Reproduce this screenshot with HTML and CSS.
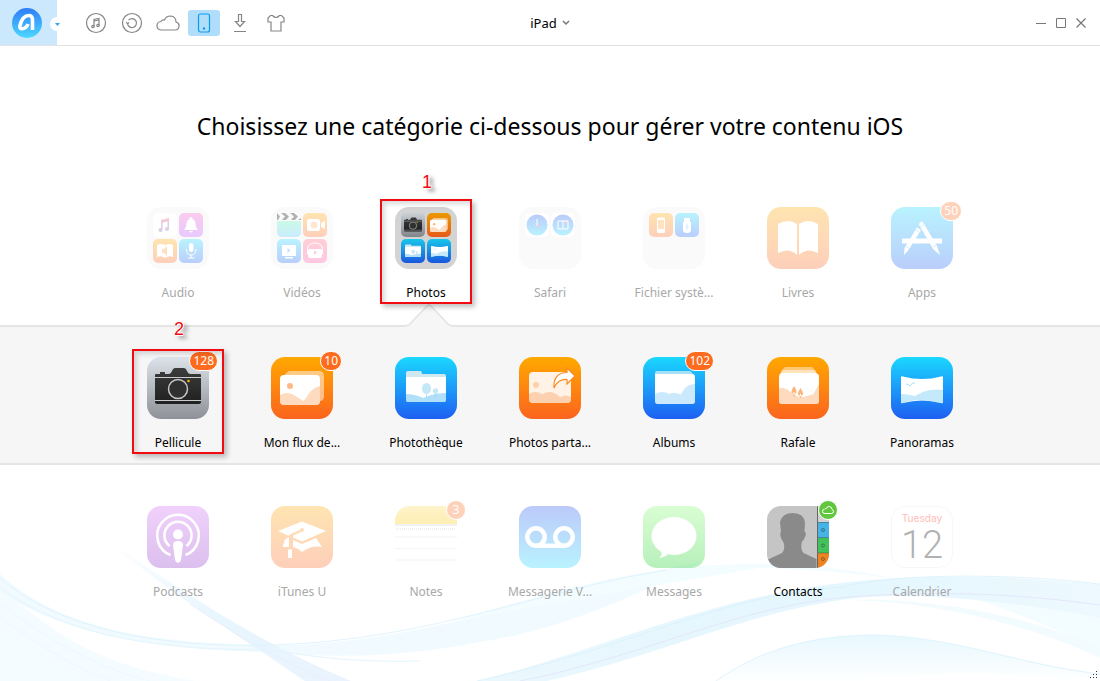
FILE: index.html
```
<!DOCTYPE html>
<html lang="fr">
<head>
<meta charset="utf-8">
<title>iPad</title>
<link rel="stylesheet" href="styles.css">
</head>
<body>
<svg class="defs" width="0" height="0" aria-hidden="true">
  <defs>
    <linearGradient id="orange" x2="0" y2="1"><stop stop-color="#ffa800"/><stop offset="1" stop-color="#fb641f"/></linearGradient>
    <linearGradient id="blue" x2="0" y2="1"><stop stop-color="#1ad8ff"/><stop offset="1" stop-color="#1d5ff2"/></linearGradient>
    <linearGradient id="blueUp" x2="0" y2="1"><stop stop-color="#2352ee"/><stop offset="1" stop-color="#1ad8ff"/></linearGradient>
    <linearGradient id="silver" x2="0" y2="1"><stop stop-color="#dde3ea"/><stop offset="1" stop-color="#8e9197"/></linearGradient>
    <linearGradient id="pink" x2="0" y2="1"><stop stop-color="#f559c8"/><stop offset="1" stop-color="#b44dff"/></linearGradient>
    <linearGradient id="rose" x2="0" y2="1"><stop stop-color="#ff5f78"/><stop offset="1" stop-color="#ff4c9c"/></linearGradient>
    <linearGradient id="violet" x2="0" y2="1"><stop stop-color="#d269f6"/><stop offset="1" stop-color="#8a2fc4"/></linearGradient>
    <linearGradient id="green" x2="0" y2="1"><stop stop-color="#86fa70"/><stop offset="1" stop-color="#14cf22"/></linearGradient>
    <linearGradient id="mint" x2="0" y2="1"><stop stop-color="#52f0b5"/><stop offset="1" stop-color="#52c1fa"/></linearGradient>
    <linearGradient id="note" x2="0" y2="1"><stop stop-color="#ffda57"/><stop offset="1" stop-color="#fdc900"/></linearGradient>
    <linearGradient id="music" x2="0" y2="1"><stop stop-color="#ff4252"/><stop offset="1" stop-color="#3a74ff"/></linearGradient>
    <linearGradient id="body" x2="0" y2="1"><stop stop-color="#3c3c3c"/><stop offset="1" stop-color="#202020"/></linearGradient>
    <linearGradient id="brand" x2="0" y2="1"><stop stop-color="#2f7cf8"/><stop offset="1" stop-color="#4bd8ff"/></linearGradient>
    <linearGradient id="ribbon"><stop stop-color="#def3fd" stop-opacity=".6"/><stop offset=".6" stop-color="#e4f6fe"/><stop offset="1" stop-color="#edf9fe"/></linearGradient>
    <linearGradient id="mist" x2="0" y2="1"><stop stop-color="#e8f8fe"/><stop offset="1" stop-color="#fff"/></linearGradient>
    <linearGradient id="diag" x2="1" y2="1"><stop stop-color="#e6f6fe" stop-opacity="0"/><stop offset=".5" stop-color="#e8f6fe"/><stop offset="1" stop-color="#eaf3fe"/></linearGradient>
    <clipPath id="tileClip"><rect width="62" height="62" rx="14"/></clipPath>
    <symbol id="camera" viewBox="0 0 46 36">
      <path d="M5 4h5v2H5zM0 7q0-1 1-1h13q2 0 3-3t3-3h9q2 0 3 3t3 3h10q1 0 1 1v27q0 2-2 2H2q-2 0-2-2z" fill="url(#body)"/>
      <path d="M0 9.500h46M0 32.500h46" stroke="#c9cbce"/>
      <circle cx="23" cy="21" r="11" fill="#272727"/><circle cx="23" cy="21" r="9.500" fill="#303030" stroke="#c5c7c9" stroke-width="1.500"/><circle cx="33.500" cy="13" r="1.300" fill="#f7b500"/>
    </symbol>
    <symbol id="picture" viewBox="0 0 44 34">
      <path d="M9 0h30q5 0 5 5v20q0 5-4 5H4V6q0-3 5-6z" fill="#fff" opacity=".5"/>
      <rect y="4" width="40" height="30" rx="4" fill="#fff"/><circle cx="10" cy="15" r="3" fill="#ffb783"/>
      <path d="M0 24q7-4 14 0t14 10H4q-4 0-4-4zM18 34q6-3 10-10t12-9v15q0 4-4 4z" fill="#fdc193" opacity=".6"/>
    </symbol>
    <symbol id="folder" viewBox="0 0 40 32">
      <path d="M0 2q0-2 2-2h12q2 0 2 3h22q2 0 2 2v4H0z" fill="#cfe8f2"/><path d="M0 6h40v23q0 2-2 2H2q-2 0-2-2z" fill="#fff"/>
      <ellipse cx="20.500" cy="17.500" rx="4.500" ry="5.500" fill="#c4e9f6"/><circle cx="29.500" cy="20" r="2.700" fill="#c4e9f6"/><path d="M20.500 20v7M29.500 21v5" stroke="#c4e9f6"/>
      <path d="M0 23q12 0 25 8H2q-2 0-2-2zM11 31q12-9 29-9v7q0 2-2 2z" fill="#7cc9f6" opacity=".6"/>
    </symbol>
    <symbol id="pano" viewBox="0 0 42 28">
      <path d="M0 1q0-1 2-.500 19 5 38 0 2-.500 2 .500v25q0 2-2 1-19-5-38 0-2 1-2-1z" fill="#fff"/>
      <path d="M0 18q12 0 22 6-11 0-20 3-2 1-2-1zM8 25q14-14 34-11v12q0 2-2 1-17-4-32-2z" fill="#9bdaf8" opacity=".6"/><path d="M5 8q3 0 4 2 2-4 5-3" stroke="#a8ddfa" fill="none"/>
    </symbol>
    <symbol id="clouds" viewBox="0 0 24 16"><path d="M6 15q-5 0-5-4.200 0-4 4-4.300Q6 4.500 8.500 5q1.500-4 6-4 5.500.500 5.500 6 3.500 1 3 4.500-.500 3.500-4 3.500z" fill="none" stroke="currentColor" stroke-width="1.200"/></symbol>
  </defs>
</svg>

<div class="app">
  <header class="bar">
    <div class="bar-left">
      <div class="brand">
        <button class="brand-logo" aria-label="AnyTrans">
          <svg width="30" height="30" viewBox="0 0 30 30"><circle cx="15" cy="15" r="15" fill="url(#brand)"/><path d="M20.500 22V12.500Q20.500 7.500 17 7.500C12 7.500 9 13 7.800 18.200Q7.500 20.800 10 20.800Q14.500 20.500 16 16" fill="none" stroke="#fff" stroke-width="3.600" stroke-linejoin="round"/></svg>
        </button>
        <button class="brand-more" aria-label="Menu"><svg width="5" height="3" viewBox="0 0 5 3"><path d="M0 0h5L2.500 3z" fill="#32a8ec"/></svg></button>
      </div>
      <nav class="tools">
        <button class="tool" aria-label="Musique"><svg width="22" height="22" viewBox="0 0 22 22" fill="none" stroke="currentColor" stroke-width="1.200"><circle cx="11" cy="11" r="9.500"/><path d="M9 14.500V7.500l5-1v7M9 9l5-1"/><circle cx="8" cy="14.500" r="1.200"/><circle cx="13" cy="13.500" r="1.200"/></svg></button>
        <button class="tool" aria-label="Restaurer"><svg width="22" height="22" viewBox="0 0 22 22" fill="none" stroke="currentColor" stroke-width="1.200"><circle cx="11" cy="11" r="9.500"/><path d="M7.500 8.200a4.500 4.500 0 1 1-1 3.300M5.200 10.200l1.300 1.500 1.700-1.200"/></svg></button>
        <button class="tool" aria-label="iCloud"><svg width="24" height="16"><use href="#clouds"/></svg></button>
        <button class="tool tool-on" aria-label="Appareil"><svg width="14" height="20" viewBox="0 0 14 20" fill="none" stroke="currentColor" stroke-width="1.200"><rect x="1.500" y="1" width="11" height="18" rx="2"/><circle cx="7" cy="15.500" r=".600" fill="currentColor"/></svg></button>
        <button class="tool" aria-label="Télécharger"><svg width="14" height="20" viewBox="0 0 14 20" fill="none" stroke="currentColor" stroke-width="1.200"><path d="M5.500 1.500h3v7h3L7 13.500 2.500 8.500h3zM1 18.500h12"/></svg></button>
        <button class="tool" aria-label="Thèmes"><svg width="18" height="20" viewBox="0 0 18 20" fill="none" stroke="currentColor" stroke-width="1.200"><path d="M5.500 2.500q3.500 4 7 0h2L17 5v4h-3v9H4V9H1V5l2.500-2.500z"/></svg></button>
      </nav>
    </div>
    <button class="device">iPad <svg width="8" height="6" viewBox="0 0 8 6"><path d="M1 1l3 3 3-3" fill="none" stroke="#777" stroke-width="1.500"/></svg></button>
    <div class="window-buttons">
      <button aria-label="Réduire"><svg width="12" height="12" viewBox="0 0 12 12"><path d="M1 6.500h10" stroke="currentColor"/></svg></button>
      <button aria-label="Agrandir"><svg width="12" height="12" viewBox="0 0 12 12"><path d="M1.500 1.500h9v9h-9z" fill="none" stroke="currentColor"/></svg></button>
      <button aria-label="Fermer"><svg width="12" height="12" viewBox="0 0 12 12"><path d="M1.500 1.500l9 9m0-9l-9 9" stroke="currentColor" stroke-width="1.200"/></svg></button>
    </div>
  </header>

  <main class="content">
    <svg class="waves" viewBox="0 0 1100 181" preserveAspectRatio="none" aria-hidden="true">
      <path d="M0 92C50 120 70 160 196 181H0z" fill="#f4fcff"/>
      <path d="M0 74C60 130 160 146 290 145C430 140 560 90 700 62C640 95 560 130 480 142C400 158 330 158 270 152C130 150 50 125 0 92z" fill="#eefaff" opacity=".8"/>
      <path d="M105 40C170 80 240 135 351 181H305C230 130 180 100 105 40z" fill="url(#diag)"/>
      <path d="M456 120C560 90 640 64 758 64C880 64 1000 100 1100 150V118C1000 95 880 70 758 68z" fill="#f3fcff"/>
      <path d="M477 181C640 140 740 77 947 77C1000 76 1050 80 1100 84V118C1010 100 900 90 840 100C740 115 660 155 547 181z" fill="url(#ribbon)"/>
      <path d="M716 181C760 150 810 135 877 135C960 138 1020 165 1100 174V181H1060C1000 170 930 172 870 181z" fill="url(#mist)"/>
      <path d="M840 100C920 96 1040 116 1100 150V158C1020 120 920 100 840 100z" fill="#eaf8fe" opacity=".6"/>
      <g fill="none" stroke-width="1">
        <path d="M0 78C60 130 160 148 273 145C430 140 540 90 666 70" stroke="#d8f1fc" opacity=".8"/>
        <path d="M0 88C70 138 160 150 273 150C330 160 370 162 420 161" stroke="#e2f5fd"/>
        <path d="M477 181C640 145 720 95 842 87C900 72 1020 74 1100 84" stroke="#d8f1fb" opacity=".8"/>
        <path d="M520 181C650 155 740 105 850 97C940 90 1020 94 1100 105" stroke="#e4e7fb"/>
        <path d="M716 181C760 150 810 135 877 135C960 138 1020 165 1100 174" stroke="#dff4fd"/>
        <path d="M0 104C50 140 90 165 150 181M0 118C40 145 70 165 110 181" stroke="#ecf9fe"/>
        <path d="M190 104C230 130 275 160 330 181" stroke="#e8effd"/>
      </g>
    </svg>

    <h1 class="heading">Choisissez une catégorie ci-dessous pour gérer votre contenu iOS</h1>

    <section class="row row-top">
      <button class="item dim">
        <span class="tile"><svg viewBox="0 0 62 62"><rect width="62" height="62" rx="14" fill="#f0f0f0"/><rect x="6" y="6" width="24" height="24" rx="5" fill="#fff"/><rect x="32" y="6" width="24" height="24" rx="5" fill="url(#pink)"/><rect x="6" y="32" width="24" height="24" rx="5" fill="url(#orange)"/><rect x="32" y="32" width="24" height="24" rx="5" fill="url(#blue)"/>
          <g fill="url(#music)"><path d="M14 13l8-2v3l-8 2zM14 13h1.500v10H14zM20.500 12H22v10h-1.500z"/><circle cx="13.500" cy="23" r="2"/><circle cx="20" cy="22" r="2"/></g>
          <g fill="#fff"><path d="M44 10q1.500 0 1.500 2 3 1 3 5 0 3 2 5v1H37.500v-1q2-2 2-5 0-4 3-5 0-2 1.500-2zM42 24h4q-2 3-4 0z"/><path d="M10 38q4-2 8 0 4-2 8 0v12q-4-2-8 1-4-3-8-1z"/><rect x="42" y="36" width="4.500" height="9" rx="2.200"/></g>
          <path d="M15 42h2l3-3v10l-3-3h-2z" fill="#ff9640"/><path d="M39.500 42q0 6 4.700 6t4.700-6M44.200 48v3M41 51h6.500" fill="none" stroke="#fff"/></svg></span>
        <span class="label">Audio</span>
      </button>
      <button class="item dim">
        <span class="tile"><svg viewBox="0 0 62 62"><rect width="62" height="62" rx="14" fill="#f0f0f0"/><path d="M6 14h24v11q0 5-5 5H11q-5 0-5-5z" fill="url(#mint)"/><rect x="32" y="6" width="24" height="24" rx="5" fill="url(#orange)"/><rect x="6" y="32" width="24" height="24" rx="5" fill="url(#blue)"/><rect x="32" y="32" width="24" height="24" rx="5" fill="url(#rose)"/>
          <path d="M6 6l3 3.500L7 13H6zM10 6h4l4 3.500-3 3.500h-4l3-3.500zM19 6h4l4 3.500-3 3.500h-4l3-3.500zM27 13l3-2v2z" fill="#000"/>
          <g fill="#fff"><rect x="36" y="12" width="13" height="12" rx="2"/><path d="M50 16l4-2v8l-4-2z"/><rect x="11" y="38" width="14" height="11"/><path d="M14 50h8v1.500h-8z"/><rect x="37" y="42" width="14" height="9" rx="2"/></g><path d="M36.500 47v-4q0-7 7.500-7t7.500 7v4" stroke="#fff" fill="none"/><circle cx="43" cy="18" r="3.500" fill="#ffb36f"/><path d="M16.500 41l3 2.500-3 2.500z" fill="#3791ff"/><path d="M43 43.500l3 2-3 2z" fill="#ff4f94"/></svg></span>
        <span class="label">Vidéos</span>
      </button>
      <button class="item current">
        <span class="mark">1</span><span class="frame"></span>
        <span class="tile"><svg viewBox="0 0 62 62"><rect width="62" height="62" rx="14" fill="#d3d3d3"/><rect x="6" y="6" width="24" height="24" rx="5" fill="url(#silver)"/><rect x="32" y="6" width="24" height="24" rx="5" fill="url(#orange)"/><rect x="6" y="32" width="24" height="24" rx="5" fill="url(#blue)"/><rect x="32" y="32" width="24" height="24" rx="5" fill="url(#blue)"/>
          <g fill="#000" opacity=".08"><rect x="6" y="6" width="24" height="24" rx="5"/><rect x="32" y="6" width="24" height="24" rx="5"/><rect x="6" y="32" width="24" height="24" rx="5"/><rect x="32" y="32" width="24" height="24" rx="5"/></g>
          <use href="#camera" x="9" y="10" width="18" height="15"/><use href="#picture" x="35" y="11" width="18" height="14"/><use href="#folder" x="10" y="37" width="16" height="14"/><use href="#pano" x="36" y="38" width="17" height="13"/></svg></span>
        <span class="label">Photos</span>
        <svg class="pointer" width="44" height="23" viewBox="0 0 44 23"><path d="M0 23v-1l2-1L20 2q2-2 4 0l18 19 2 1v1z" fill="#f6f6f6"/><path d="M0 21h2L20 2q2-2 4 0l18 19h2" fill="none" stroke="#e3e3e3" stroke-width="1.500"/></svg>
      </button>
      <button class="item dim">
        <span class="tile"><svg viewBox="0 0 62 62"><rect width="62" height="62" rx="14" fill="#f0f0f0"/><rect x="6" y="6" width="24" height="24" rx="5" fill="#fff"/><rect x="32" y="6" width="24" height="24" rx="5" fill="#fff"/><circle cx="18" cy="18" r="10.500" fill="url(#blueUp)"/><circle cx="44" cy="18" r="10.500" fill="url(#blueUp)"/><path d="M17.500 12h1v7h-1z" fill="#fff"/><path d="M18 18h3v1.500h-3zM46 13h2v3h-2z" fill="#f56"/><path d="M39 14h10v8H39zm5 0v8" fill="none" stroke="#fff"/></svg></span>
        <span class="label">Safari</span>
      </button>
      <button class="item dim">
        <span class="tile"><svg viewBox="0 0 62 62"><rect width="62" height="62" rx="14" fill="#f0f0f0"/><rect x="6" y="6" width="24" height="24" rx="5" fill="url(#orange)"/><rect x="32" y="6" width="24" height="24" rx="5" fill="url(#blue)"/><rect x="14" y="10.500" width="8" height="15.500" rx="1.500" fill="#fff"/><path d="M15 13h6v9h-6z" fill="#ff9d3d"/><path d="M41 11h6v4h1v8q0 3-4 3t-4-3v-8h1z" fill="#fff"/><path d="M44 17v6m-1.500-4l1.500 2 1.500-2" stroke="#58a8ff" stroke-width=".700" fill="none"/></svg></span>
        <span class="label">Fichier systè...</span>
      </button>
      <button class="item dim">
        <span class="tile"><svg viewBox="0 0 62 62"><rect width="62" height="62" rx="14" fill="url(#orange)"/><path d="M11 17q10-6 19 0v31q-8-8-19-2zM51 17q-10-6-19 0v31q8-8 19-2z" fill="#fff"/></svg></span>
        <span class="label">Livres</span>
      </button>
      <button class="item dim">
        <span class="tile"><svg viewBox="0 0 62 62"><rect width="62" height="62" rx="14" fill="url(#blue)"/><g fill="#fff"><path d="M11 31.500h9l-3 5h-6zM24 31.500h12l3 5H21zM41 31.500h10v5h-7z"/><path d="M28.500 16q2-3 4 0L46 39l3 9-7-6-13.500-23.500q-1-1 0-2.500z"/><path d="M26 20.500l4 2.500-12.500 20-4.500 5 .500-7z"/></g><path d="M25 23l3.500 2.500M15 39.500l4 2.500M41 40l5-2.500M29 20l4-2" stroke="#68acf8" stroke-width=".800"/></svg><span class="badge">50</span></span>
        <span class="label">Apps</span>
      </button>
    </section>

    <section class="row row-band">
      <button class="item current">
        <span class="mark">2</span><span class="frame"></span>
        <span class="tile"><svg viewBox="0 0 62 62"><rect width="62" height="62" rx="14" fill="url(#silver)"/><use href="#camera" x="8" y="11" width="46" height="36"/></svg><span class="badge">128</span></span>
        <span class="label">Pellicule</span>
      </button>
      <button class="item">
        <span class="tile"><svg viewBox="0 0 62 62"><rect width="62" height="62" rx="14" fill="url(#orange)"/><use href="#picture" x="9" y="14" width="44" height="34"/></svg><span class="badge">10</span></span>
        <span class="label">Mon flux de...</span>
      </button>
      <button class="item">
        <span class="tile"><svg viewBox="0 0 62 62"><rect width="62" height="62" rx="14" fill="url(#blue)"/><use href="#folder" x="11" y="14" width="40" height="32"/></svg></span>
        <span class="label">Photothèque</span>
      </button>
      <button class="item">
        <span class="tile"><svg viewBox="0 0 62 62"><rect width="62" height="62" rx="14" fill="url(#orange)"/><rect x="10" y="15" width="42" height="31" rx="4" fill="#fff2e6"/><circle cx="17" cy="28" r="3" fill="#fdd0aa"/><path d="M10 37q6-4 13 0t12 9H14q-4 0-4-4zM14 46q15-20 29-4l3 4zM36 46q7-11 16-6v2q0 4-4 4z" fill="#fcbf92" opacity=".65"/><path d="M35 31q-1-15 13-15.500v-4.500l8 8-8 8v-4.500q-9-.500-13 8.500z" fill="#fff" stroke="#fb8a20" stroke-width="1.200"/></svg></span>
        <span class="label">Photos parta...</span>
      </button>
      <button class="item">
        <span class="tile"><svg viewBox="0 0 62 62"><rect width="62" height="62" rx="14" fill="url(#blue)"/><path d="M12 16q0-2 2-2h32q3 0 4 4H12z" fill="#a5dff8"/><path d="M12 17h37q3 0 3 3v24q0 3-3 3H15q-3 0-3-3z" fill="#fff"/><path d="M12 37q12-7 25 10H15q-3 0-3-3zM17 47q12-22 31-1l-1 1zM28 47q8-6 12-13t12-7v17q0 3-3 3z" fill="#8bcffa" opacity=".45"/></svg><span class="badge">102</span></span>
        <span class="label">Albums</span>
      </button>
      <button class="item">
        <span class="tile"><svg viewBox="0 0 62 62"><rect width="62" height="62" rx="14" fill="url(#orange)"/><path d="M17 11q0-1 2-1h25q2 0 2 1l3 3v6H14v-6z" fill="#fff" opacity=".45"/><path d="M16 13h31l5 6H12z" fill="#fff" opacity=".5"/><path d="M14 16h35q3 1 3 4v24q0 3-3 3H15q-3 0-3-3V20q0-3 2-4z" fill="#fff"/><path d="M12 31q6-1 13 5t15 3q7-3 12-1v6q0 3-3 3H15q-3 0-3-3zM52 27v17q0 3-3 3h-8z" fill="#fdc193" opacity=".6"/><path d="M27 29q-5 7 0 8 5-1 0-8zM33.500 31q-5 7 0 8 5-1 0-8zM26.500 35h1v5h-1zM33 37h1v4h-1z" fill="#fcb67c"/></svg></span>
        <span class="label">Rafale</span>
      </button>
      <button class="item">
        <span class="tile"><svg viewBox="0 0 62 62"><rect width="62" height="62" rx="14" fill="url(#blue)"/><use href="#pano" x="10" y="19" width="42" height="28"/></svg></span>
        <span class="label">Panoramas</span>
      </button>
    </section>

    <section class="row row-bottom">
      <button class="item dim">
        <span class="tile"><svg viewBox="0 0 62 62"><rect width="62" height="62" rx="14" fill="url(#violet)"/><g fill="none" stroke="#fff" stroke-width="2.600"><path d="M23.500 49a20.800 20.800 0 1 1 15 0"/><path d="M22.500 40a13.600 13.600 0 1 1 17 0"/></g><circle cx="31" cy="28.500" r="5" fill="#fff"/><path d="M26 39q0-4 5-4t5 4l-2 15q-1 3-3 3t-3-3z" fill="#fff"/></svg></span>
        <span class="label">Podcasts</span>
      </button>
      <button class="item dim">
        <span class="tile"><svg viewBox="0 0 62 62"><rect width="62" height="62" rx="14" fill="url(#orange)"/><path d="M31 15.500L55 25 31 35.500 22 31.500v-2l10-4.500-1-2-13 6v1L7 25zM14 33.500L18 31v10h-6.500zM22 34l9 4 14-6 6 9q-10-2-20 5-4-4-9-5z" fill="#fff"/><path d="M17 44q2-2 4 0v8h-4z" fill="#fff"/><circle cx="31" cy="24" r="2" fill="#fc942b"/></svg></span>
        <span class="label">iTunes U</span>
      </button>
      <button class="item dim">
        <span class="tile"><svg viewBox="0 0 62 62"><rect width="62" height="62" rx="14" fill="#fff"/><path d="M0 18V14Q2 1 14 0h34q12 1 14 14v4z" fill="url(#note)"/><path d="M0 19h62" stroke="#aaa"/><path d="M1 23h60" stroke="#999" stroke-dasharray="1 1"/><path d="M0 31h62M0 42.500h62M0 54h62" stroke="#ddd"/></svg><span class="badge">3</span></span>
        <span class="label">Notes</span>
      </button>
      <button class="item dim">
        <span class="tile"><svg viewBox="0 0 62 62"><rect width="62" height="62" rx="14" fill="url(#blueUp)"/><g fill="none" stroke="#fff" stroke-width="4.500"><circle cx="17" cy="31" r="8.700"/><circle cx="45" cy="31" r="8.700"/><path d="M17 39.800h28"/></g></svg></span>
        <span class="label">Messagerie V...</span>
      </button>
      <button class="item dim">
        <span class="tile"><svg viewBox="0 0 62 62"><rect width="62" height="62" rx="14" fill="url(#green)"/><ellipse cx="31" cy="30" rx="22.500" ry="19" fill="#fff"/><path d="M18 44q2 5-2 8 7-1 10-5z" fill="#fff"/></svg></span>
        <span class="label">Messages</span>
      </button>
      <button class="item">
        <span class="tile"><svg viewBox="0 0 62 62"><g clip-path="url(#tileClip)"><path d="M0 0h62v62H0z" fill="#c5c5c5"/><path d="M13 16Q15 7 26 7t12 10l-.500 9q2 0 1 4l-2 4q-2 1-2 4-1 6 2 9l13 6v9H0v-8l15-7q3-3 2-9-1-3-2-4-3-6-1-8z" fill="#8a8a8a"/><path d="M51 0h11v16H51z" fill="#d2d2d2"/><path d="M51 16h11v16H51z" fill="#47b3e5"/><path d="M51 32h11v15H51z" fill="#43c25b"/><path d="M51 47h11v15H51z" fill="#ed8420"/><path d="M50.500 0v62" stroke="#666"/><path d="M51 16.500h11M51 31.500h11M51 47h11" stroke="#444" opacity=".4"/></g><g fill="none" stroke="#333" opacity=".5"><circle cx="56" cy="24" r="1.500"/><circle cx="56" cy="39.500" r="1.500"/><circle cx="56" cy="53" r="1.500"/></g></svg><span class="badge badge-cloud"><svg width="12" height="8" viewBox="0 0 24 16"><path d="M6 15q-5 0-5-4.200 0-4 4-4.300Q6 4.500 8.500 5q1.500-4 6-4 5.500.500 5.500 6 3.500 1 3 4.500-.500 3.500-4 3.500z" fill="none" stroke="#fff" stroke-width="2"/></svg></span></span>
        <span class="label">Contacts</span>
      </button>
      <button class="item dim">
        <span class="tile tile-date"><span class="date-day">Tuesday</span><span class="date-num">12</span></span>
        <span class="label">Calendrier</span>
      </button>
    </section>
    <svg class="grip" width="10" height="10" viewBox="0 0 10 10" aria-hidden="true"><path d="M7 1h1v1H7zM4 4h1v1H4zM7 4h1v1H7zM1 7h1v1H1zM4 7h1v1H4zM7 7h1v1H7z" fill="#333"/></svg>
  </main>
</div>
</body>
</html>
```

FILE: styles.css
```
* { box-sizing: border-box; }
body { margin: 0; background: #fff; color: #000; font-family: "Noto Sans", "Open Sans", sans-serif; font-size: 12px; }
button { margin: 0; padding: 0; border: 0; background: none; color: inherit; font: inherit; }
svg { display: block; }
.defs { position: absolute; }
.app { display: flex; flex-direction: column; min-height: 100vh; }

.bar { display: grid; grid-template-columns: 1fr auto 1fr; align-items: center; min-height: 46px; border-bottom: 1px solid #e2e2e2; }
.bar-left { display: flex; align-items: center; align-self: stretch; gap: 23px; }
.brand { position: relative; display: flex; align-items: center; align-self: stretch; width: 57px; padding-left: 12px; background: #cbe8fc; }
.brand-more { position: absolute; top: 17px; right: -7px; display: flex; align-items: center; justify-content: center; width: 14px; height: 14px; border-radius: 50%; background: #fff; }
.tools { display: flex; gap: 4px; }
.tool { display: flex; align-items: center; justify-content: center; width: 32px; height: 26px; border-radius: 3px; color: #858585; }
.tool-on { background: #b0defa; color: #0b9bee; }
.device { display: flex; align-items: center; gap: 5px; font-size: 13px; }
.window-buttons { display: flex; justify-content: flex-end; gap: 8px; padding-right: 13px; color: #777; }

.content { position: relative; flex: 1; padding-top: 64px; }
.waves { position: absolute; bottom: 0; left: 0; width: 100%; height: 181px; }
.heading { position: relative; margin: 0 0 65px; font-size: 23px; font-weight: 400; line-height: 32px; text-align: center; }

.row { position: relative; display: grid; grid-template-columns: repeat(7, 124px); justify-content: center; }
.row-top { z-index: 1; padding-bottom: 24px; }
.row-band { padding: 30px 0 12px; border: solid #e5e5e5; border-width: 2px 0; background: #f6f6f6; }
.row-bottom { padding: 41px 0 24px; }

.item { position: relative; display: flex; flex-direction: column; align-items: center; gap: 16px; }
.tile { position: relative; width: 62px; height: 62px; }
.label { line-height: 16px; white-space: nowrap; }
.dim .tile { opacity: .3; }
.dim .label { color: #a8a8a8; }

.badge { position: absolute; top: -6px; right: -9px; display: flex; align-items: center; justify-content: center; min-width: 20px; height: 20px; padding: 0 3px; border: 1px solid #fff; border-radius: 10px; background: #fd6b1e; color: #fff; font-size: 12px; line-height: 18px; }
.badge-cloud { background: #62c63f; }

.tile-date { display: flex; flex-direction: column; align-items: center; padding-top: 4px; border: 1px solid #e6e6e6; border-radius: 14px; background: #fff; }
.date-day { color: #ff3b30; font-family: Inter, sans-serif; font-size: 10px; font-weight: 500; line-height: 14px; }
.date-num { color: #000; font-family: Roboto, sans-serif; font-size: 38px; font-weight: 300; line-height: 40px; }

.pointer { position: absolute; bottom: -26px; left: 43px; }
.frame { position: absolute; top: -8px; left: 16px; z-index: 1; width: 92px; height: 105px; border: 2px solid #f00c10; box-shadow: 3px 3px 5px rgba(0, 0, 0, .25), inset 3px 3px 5px rgba(0, 0, 0, .15); }
.mark { position: absolute; top: -37px; left: 58px; z-index: 1; color: #f00c10; font-family: "Liberation Sans", Arial, sans-serif; font-size: 18px; line-height: 24px; text-shadow: 1px 0 #fff, -1px 0 #fff, 0 1px #fff, 0 -1px #fff, 4px 3px 4px rgba(0, 0, 0, .6); }
.row-band .mark { top: -40px; }
.grip { position: absolute; right: 1px; bottom: 1px; }
```
